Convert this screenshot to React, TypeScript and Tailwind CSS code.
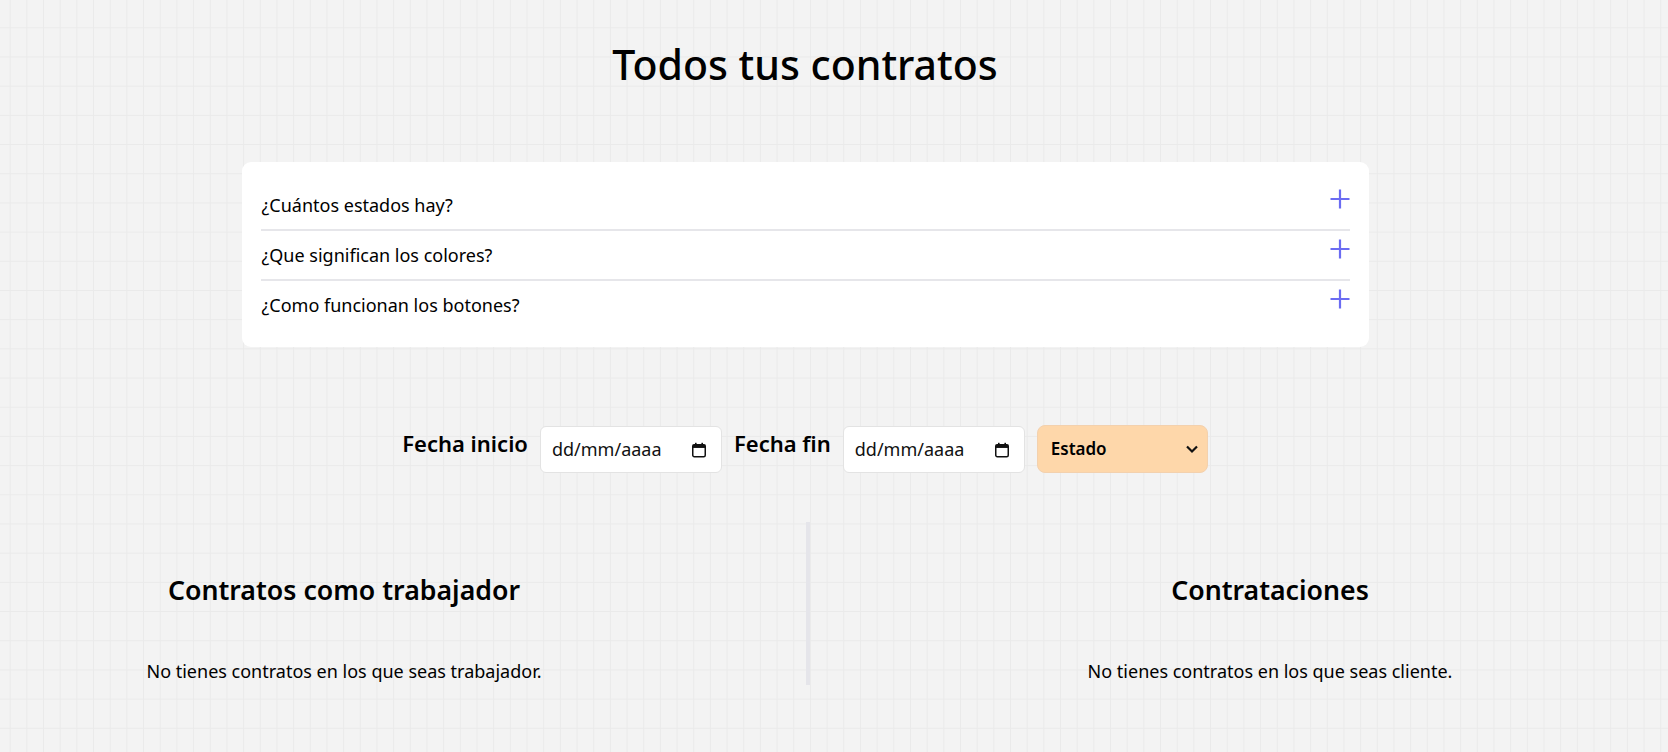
import React from "react";

const FONT = { fontFamily: '"Noto Sans", "Open Sans", sans-serif' };

function Plus() {
  return (
    <svg width="20" height="20" viewBox="0 0 20 20" className="shrink-0 mt-[-2px]">
      <path d="M10 0.5V19.5M0.5 10H19.5" stroke="#6b6cf2" strokeWidth="2.2" fill="none" />
    </svg>
  );
}

function CalendarIcon() {
  return (
    <svg width="16" height="16" viewBox="0 0 16 16" className="shrink-0">
      <rect x="1.75" y="2.75" width="12.5" height="12" rx="1.5" fill="none" stroke="#111" strokeWidth="1.5" />
      <rect x="1.75" y="2.75" width="12.5" height="3.2" fill="#111" />
      <rect x="4" y="0.8" width="1.6" height="3" fill="#111" />
      <rect x="10.4" y="0.8" width="1.6" height="3" fill="#111" />
    </svg>
  );
}

function DateBox() {
  return (
    <div className="w-[182px] h-[47px] bg-white border border-[#e3e3e3] rounded-[6px] flex items-center justify-between pl-[11px] pr-[14px]">
      <span className="text-[18px] text-[#111]">dd/mm/aaaa</span>
      <CalendarIcon />
    </div>
  );
}

const faqs = ["¿Cuántos estados hay?", "¿Que significan los colores?", "¿Como funcionan los botones?"];

export default function App() {
  return (
    <div
      className="min-h-screen w-full bg-[#f3f3f3] bg-[linear-gradient(to_right,#eaeaea_1px,transparent_1px),linear-gradient(to_bottom,#eaeaea_1px,transparent_1px)] bg-[size:16.68px_29.2px] bg-[position:9.7px_27.3px] text-black"
      style={FONT}
    >
      <div className="w-[1610px] flex flex-col items-center">
        <h1 className="mt-[44px] text-[41px] leading-[41px] font-medium">Todos tus contratos</h1>

        <div className="mt-[77px] w-[1127px] bg-white rounded-[9px] px-[19px] pt-[19px] pb-[18px]">
          {faqs.map((q, i) => (
            <div
              key={q}
              className={`flex items-start justify-between py-2.5 ${i < faqs.length - 1 ? "border-b-2 border-[#e6e6ea]" : ""}`}
            >
              <span className="text-[18px] leading-[28px] pl-px">{q}</span>
              <Plus />
            </div>
          ))}
        </div>

        <div className="mt-[79px] flex items-start gap-3">
          <span className="text-[22px] leading-[32px] mt-px font-semibold">Fecha inicio</span>
          <DateBox />
          <span className="text-[22px] leading-[32px] mt-px font-semibold">Fecha fin</span>
          <DateBox />
          <div className="w-[171px] h-[48px] mt-[-1px] bg-[#fed7aa] border border-[#f3d1ae] rounded-[8px] flex items-center justify-between pl-[13px] pr-[8px]">
            <span className="text-[17px] font-semibold">Estado</span>
            <svg width="14" height="10" viewBox="0 0 14 10">
              <path d="M2 2.5L7 7.5L12 2.5" stroke="#111" strokeWidth="2.2" fill="none" />
            </svg>
          </div>
        </div>
      </div>

      <div className="mt-[49px] flex w-full">
        <div className="w-[688px] flex flex-col items-center pt-[50px]">
          <h2 className="text-[26.7px] leading-[36px] font-semibold">Contratos como trabajador</h2>
          <p className="mt-[49px] text-[18px] leading-[28px]">No tienes contratos en los que seas trabajador.</p>
        </div>
        <div className="ml-[118px] w-[4px] bg-[#e5e5ea]" />
        <div className="ml-[62px] w-[796px] flex flex-col items-center pt-[50px]">
          <h2 className="text-[26.7px] leading-[36px] font-semibold">Contrataciones</h2>
          <p className="mt-[49px] text-[18px] leading-[28px]">No tienes contratos en los que seas cliente.</p>
        </div>
      </div>
      <div className="h-[60px]" />
    </div>
  );
}
